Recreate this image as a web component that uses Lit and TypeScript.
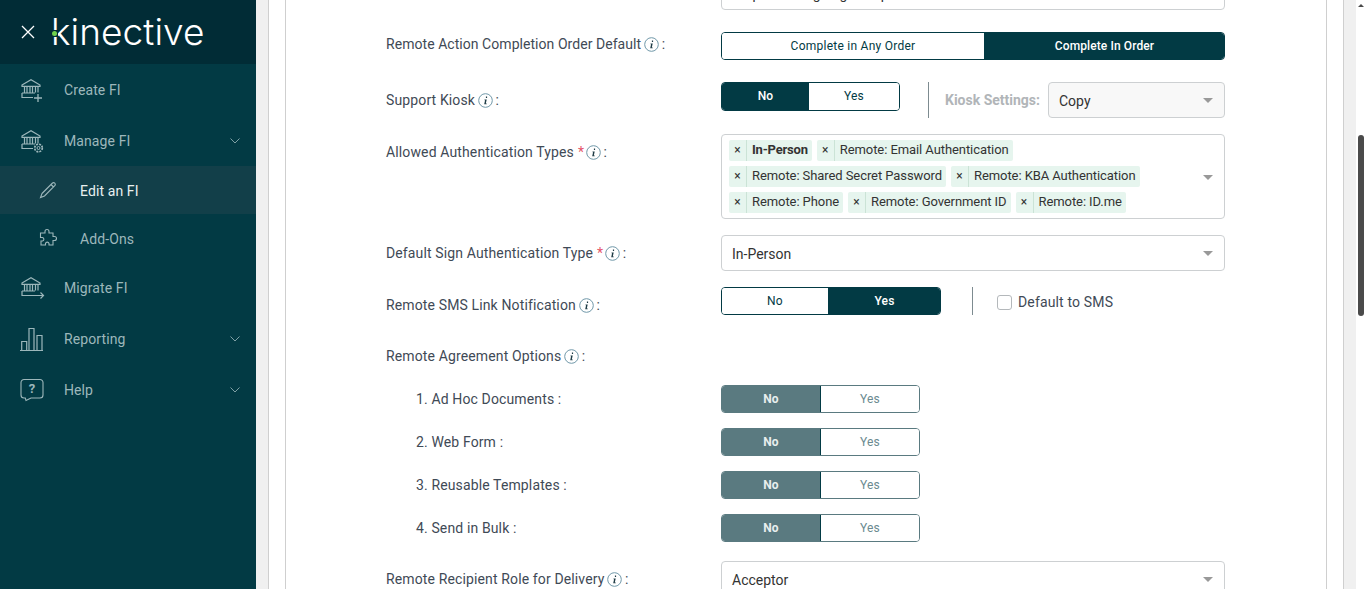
import { LitElement, html, css, svg } from 'lit';
import { customElement } from 'lit/decorators.js';

const info = html`<svg class="info" width="15" height="15" viewBox="0 0 15 15">
  <circle cx="7.5" cy="7.5" r="6.8" fill="none" stroke="#6f97a8" stroke-width="1"/>
  <path d="M7.9 3.600h1.200v1.300H7.900zM6.600 6.400h2.100l-.9 4h.9v.8H6.200l.9-4h-.7z" fill="#1d3a44"/>
</svg>`;

const bank = svg`<path d="M4 9 13 3.800 22 9v1.300H4zM6.500 11v5.500M9 11v5.500M12 11v5.500M14.500 11v5.500M17.500 11v5.500M20 11v5.500M4 17h13M4 17v4.500h11" fill="none" stroke="currentColor" stroke-width="1.200"/>`;

const navIcons: Record<string, unknown> = {
  create: html`<svg width="28" height="28" viewBox="0 0 28 28">${bank}<path d="M20 18v8M16 22h8" fill="none" stroke="currentColor" stroke-width="1.300"/></svg>`,
  manage: html`<svg width="28" height="28" viewBox="0 0 28 28">${bank}<circle cx="20.500" cy="21" r="1.500" fill="none" stroke="currentColor" stroke-width="1"/><circle cx="20.500" cy="21" r="3.800" fill="none" stroke="currentColor" stroke-width="1.700" stroke-dasharray="2 1"/></svg>`,
  migrate: html`<svg width="28" height="28" viewBox="0 0 28 28">${bank}<path d="M4 21.500h21.500M22.500 18.500l3 3-3 3" fill="none" stroke="currentColor" stroke-width="1.200"/></svg>`,
  reporting: html`<svg width="28" height="28" viewBox="0 0 28 28"><path d="M2 25.500h23M3.700 25V16.500h5V25M11 25V3.500h5V25M19 25V10.500h5V25" fill="none" stroke="currentColor" stroke-width="1.200"/></svg>`,
  help: html`<svg width="28" height="28" viewBox="0 0 28 28"><path d="M6 3.500h16a3 3 0 0 1 3 3v12.500a3 3 0 0 1-3 3H13l-5 2.500-.700-2.500H6a3 3 0 0 1-3-3V6.500a3 3 0 0 1 3-3z" fill="none" stroke="currentColor" stroke-width="1.100"/><text x="14" y="17" text-anchor="middle" font-size="13" font-weight="700" font-family="Roboto" fill="currentColor">?</text></svg>`,
  edit: html`<svg width="20" height="20" viewBox="0 0 20 20"><path d="M4 13.500 14.500 3a1.800 1.800 0 0 1 2.500 2.500L6.500 16 2.500 17.500zM13 4.500l2.500 2.500" fill="none" stroke="currentColor" stroke-width="1.100"/></svg>`,
  addons: html`<svg width="20" height="20" viewBox="0 0 20 20"><path d="M7 5V3.500a2 2 0 0 1 4 0V5h4v3.500h1.500a2 2 0 0 1 0 4H15V17h-4v-1.500a1.800 1.800 0 0 0-3.500 0V17H3v-4h1.500a1.800 1.800 0 0 0 0-3.500H2.500V5z" fill="none" stroke="currentColor" stroke-width="1.100"/></svg>`,
};

const chevron = html`<svg class="chev" width="10" height="6" viewBox="0 0 10 6"><path d="M.5.5 5 5 9.500.5" fill="none" stroke="currentColor" stroke-width="1"/></svg>`;

@customElement('app-root')
export class AppRoot extends LitElement {
  static styles = css`
    :host { display: block; height: 589px; overflow: hidden; font-family: Roboto, sans-serif; font-size: 14px; color: #3f4a56; }
    .page { display: flex; height: 589px; background: #f0f0f0; }
    .side { width: 256px; flex: none; background: #023a44; color: #9db7bb; letter-spacing: .1px; }
    .brand { height: 64px; background: #012c36; display: flex; align-items: center; padding-left: 21px; gap: 16px; color: #fff; }
    .logo { font-family: Inter, sans-serif; font-size: 37px; font-weight: 300; letter-spacing: .05px; line-height: 1; position: relative; top: -1px; }
    .dot { position: absolute; left: 0; top: 17px; width: 7px; height: 7px; background: #012c36; }
    .dot::after { content: ''; position: absolute; left: 1px; top: 1px; width: 5px; height: 5px; border-radius: 50%; background: #6fd24d; }
    .nav { display: flex; align-items: center; height: 51px; padding-left: 18px; }
    .nav svg:first-child { width: 28px; height: 28px; margin-right: 18px; flex: none; }
    .nav .chev { margin-left: auto; margin-right: 16px; color: #7fa0a5; }
    .sub { display: flex; align-items: center; height: 48px; padding-left: 38px; }
    .sub span { padding-top: 2px; }
    .sub svg { margin-right: 22px; color: #9db7bb; }
    .sub.on { background: #123f49; color: #e8f0f0; }
    .main { flex: 1; padding: 0 12px; min-width: 0; }
    .panel { height: 589px; border: solid #cfcfcf; border-width: 0 1px; background: #fff; padding: 0 16px; overflow: hidden; }
    .card { height: 589px; border: solid #cfcfcf; border-width: 0 1px; overflow: hidden; padding: 0 100px; }
    .rows { margin-top: -26px; }
    .row { display: grid; grid-template-columns: 335px 504px; align-items: start; margin-bottom: 16px; }
    .row.wide { margin-bottom: 22px; }
    .row.sms { margin-bottom: 23px; }
    .row.head { margin-bottom: 19px; }
    .row.opt { margin-bottom: 15px; }
    .row.opt.last { margin-bottom: 19px; }
    .label { height: 36px; display: flex; align-items: center; gap: 2px; white-space: pre; letter-spacing: .13px; }
    .label.short { height: 24px; letter-spacing: .05px; }
    .label.mid { height: 20px; }
    .label.seg-h { height: 28px; padding-left: 30px; }
    .info { margin: 0 .5px 0 1px; flex: none; }
    .req { color: #e5566a; margin: 0 -1px 0 2px; }
    .select { height: 36px; box-sizing: border-box; border: 1px solid #cdd0d2; border-radius: 4px; display: flex; align-items: center; padding: 2px 10px 0; position: relative; background: #fff; color: #333; }
    .select.ro { width: 177px; background: #f8f8f8; }
    .cut { padding-top: 3px; }
    .caret { position: absolute; right: 11px; top: 50%; margin-top: -2px; border: 5px solid transparent; border-top-color: #999; border-bottom: 0; }
    .seg { display: flex; height: 28px; box-sizing: border-box; border: 1px solid #023a44; border-radius: 4px; overflow: hidden; font-size: 12px; font-weight: 400; color: #023a44; letter-spacing: .25px; }
    .seg span { display: flex; align-items: center; justify-content: center; box-sizing: border-box; background: #fff; padding-bottom: 1px; flex: 1; }
    .seg span.on { background: #023a44; color: #fff; font-weight: 500; letter-spacing: .1px; padding-left: 1px; }
    .seg span.any { flex: 0 0 262px; }
    .seg.kiosk-seg { width: 179px; height: 29px; margin-right: 28px; }
    .seg.kiosk-seg span:first-child { flex: 0 0 87px; padding-left: 0; }
    .seg.sms-seg { width: 220px; margin-right: 31px; }
    .seg.sms-seg span:first-child { flex: 0 0 106px; }
    .seg.off { border-color: #5a7a80; color: #6b8a90; width: 199px; }
    .seg.off span { flex: 0 0 100px; font-weight: 400; padding-right: 2px; }
    .seg.off span.on { background: #5a7a80; color: #e8eeee; font-weight: 700; flex: 0 0 99px; border-right: 1px solid #023a44; padding: 0 0 1px; }
    .inline { display: flex; align-items: flex-start; }
    .vr { width: 1px; background: #7d8b90; height: 36px; }
    .vr.low { height: 28px; }
    .kiosk { color: #b1b5b8; font-weight: 700; margin: 0 8px 0 16px; line-height: 36px; }
    .chips { height: 85px; box-sizing: border-box; border: 1px solid #cdd0d2; border-radius: 4px; padding: 5px 7px 0; position: relative; }
    .line { display: flex; gap: 5px; margin-bottom: 5px; }
    .chip { display: flex; height: 21px; align-items: center; background: #e6f5ee; border-radius: 2px; color: #333; font-size: 13px; white-space: pre; }
    .chip i { font-style: normal; width: 18px; text-align: center; box-sizing: border-box; align-self: stretch; line-height: 20px; border-right: 1px solid #cbe3d6; font-size: 12px; }
    .chip span { padding: 0 4px 2px 5px; letter-spacing: -.08px; }
    .chip.strong span { font-weight: 700; letter-spacing: -.2px; }
    .check { display: flex; align-items: center; gap: 6px; margin-left: 24px; height: 30px; color: #3f4a56; letter-spacing: .15px; }
    .box { width: 13px; height: 13px; border: 1px solid #b4b8bb; border-radius: 3px; }
    .sbar { width: 10px; flex: none; background: #fff; position: relative; }
    .thumb { position: absolute; left: 2px; width: 6px; top: 135px; height: 181px; border-radius: 3px; background: #4a4a4a; }
    .arrow { position: absolute; left: 2px; top: 4px; border: 3px solid transparent; border-bottom-color: #4a4a4a; border-top: 0; }
  `;

  private nav(icon: string, label: string, chev = false) {
    return html`<div class="nav">${navIcons[icon]}<span>${label}</span>${chev ? chevron : ''}</div>`;
  }

  private lab(text: string, req = false, size = '') {
    return html`<div class="label ${size}">${text}${req ? html`<span class="req">*</span>` : ''}${info}<span>:</span></div>`;
  }

  private chip(text: string, strong = false) {
    return html`<div class="chip ${strong ? 'strong' : ''}"><i>×</i><span>${text}</span></div>`;
  }

  private off(label: string, last = false) {
    return html`<div class="row opt ${last ? 'last' : ''}">
      <div class="label seg-h">${label} :</div>
      <div class="seg off"><span class="on">No</span><span>Yes</span></div>
    </div>`;
  }

  render() {
    return html`<div class="page">
      <aside class="side">
        <div class="brand">
          <svg width="14" height="14" viewBox="0 0 14 14"><path d="M1 1l12 12M13 1 1 13" stroke="#fff" stroke-width="1.300" fill="none"/></svg>
          <div class="logo">kinective<i class="dot"></i></div>
        </div>
        ${this.nav('create', 'Create FI')}
        ${this.nav('manage', 'Manage FI', true)}
        <div class="sub on">${navIcons.edit}<span>Edit an FI</span></div>
        <div class="sub">${navIcons.addons}<span>Add-Ons</span></div>
        ${this.nav('migrate', 'Migrate FI')}
        ${this.nav('reporting', 'Reporting', true)}
        ${this.nav('help', 'Help', true)}
      </aside>
      <div class="main"><div class="panel"><div class="card"><div class="rows">
        <div class="row wide"><div></div><div class="select cut"><span>Sequential Signing Group</span></div></div>
        <div class="row wide">${this.lab('Remote Action Completion Order Default', false, 'short')}
          <div class="seg"><span class="any">Complete in Any Order</span><span class="on">Complete In Order</span></div></div>
        <div class="row">${this.lab('Support Kiosk')}
          <div class="inline">
            <div class="seg kiosk-seg"><span class="on">No</span><span>Yes</span></div>
            <div class="vr"></div>
            <div class="kiosk">Kiosk Settings:</div>
            <div class="select ro"><span>Copy</span><i class="caret"></i></div>
          </div></div>
        <div class="row">${this.lab('Allowed Authentication Types', true)}
          <div class="chips">
            <div class="line">${this.chip('In-Person', true)}${this.chip('Remote: Email Authentication')}</div>
            <div class="line">${this.chip('Remote: Shared Secret Password')}${this.chip('Remote: KBA Authentication')}</div>
            <div class="line">${this.chip('Remote: Phone')}${this.chip('Remote: Government ID')}${this.chip('Remote: ID.me')}</div>
            <i class="caret"></i>
          </div></div>
        <div class="row">${this.lab('Default Sign Authentication Type', true)}
          <div class="select"><span>In-Person</span><i class="caret"></i></div></div>
        <div class="row sms">${this.lab('Remote SMS Link Notification')}
          <div class="inline">
            <div class="seg sms-seg"><span>No</span><span class="on">Yes</span></div>
            <div class="vr low"></div>
            <div class="check"><div class="box"></div>Default to SMS</div>
          </div></div>
        <div class="row head">${this.lab('Remote Agreement Options', false, 'mid')}<div></div></div>
        ${this.off('1. Ad Hoc Documents')}
        ${this.off('2. Web Form')}
        ${this.off('3. Reusable Templates')}
        ${this.off('4. Send in Bulk', true)}
        <div class="row">${this.lab('Remote Recipient Role for Delivery')}
          <div class="select"><span>Acceptor</span><i class="caret"></i></div></div>
      </div></div></div></div>
      <div class="sbar"><i class="arrow"></i><div class="thumb"></div></div>
    </div>`;
  }
}
